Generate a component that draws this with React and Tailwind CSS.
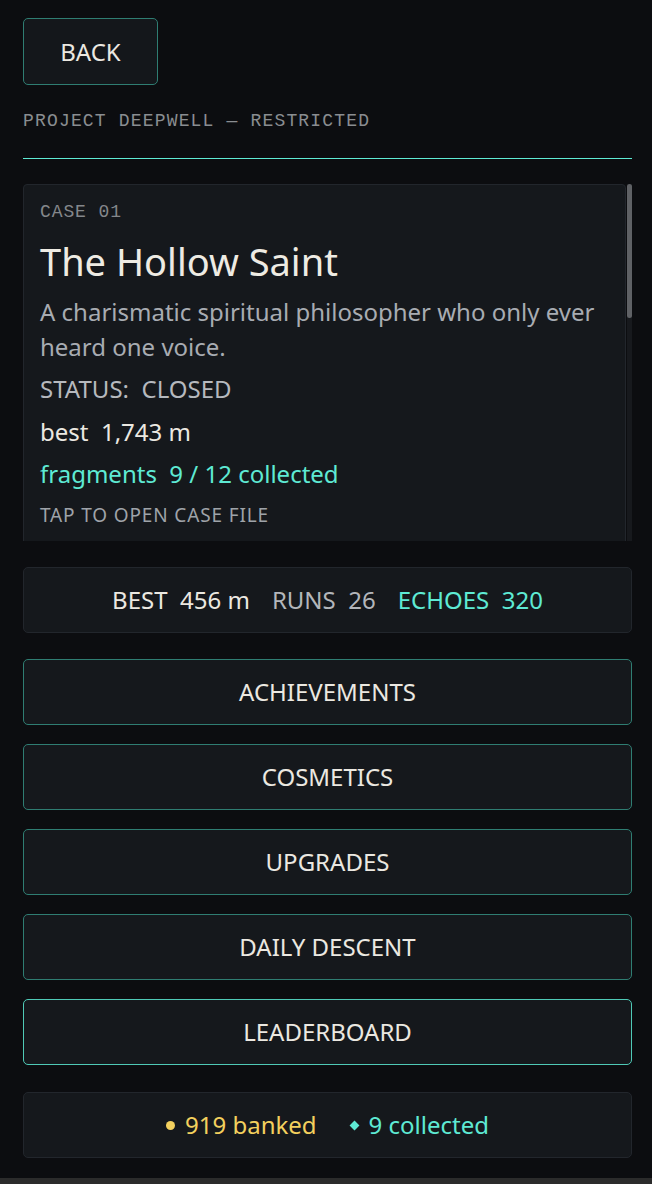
import React from 'react';

const cases = [
    {
        id: '01',
        title: 'The Hollow Saint',
        desc: 'A charismatic spiritual philosopher who only ever heard one voice.',
        status: 'CLOSED',
        best: '1,743 m',
        fragments: '9 / 12 collected',
    },
    {
        id: '02',
        title: 'The Quiet Engineer',
        desc: 'A builder of machines who stopped speaking the year the well was sealed.',
        status: 'OPEN',
        best: '456 m',
        fragments: '0 / 12 collected',
    },
];

const menu = ['ACHIEVEMENTS', 'COSMETICS', 'UPGRADES', 'DAILY DESCENT', 'LEADERBOARD'];

function CaseCard({ c }) {
    return (
        <div className="rounded-[4px] border border-[#22262c] bg-[#15181c] pl-[16px] pr-[20px] pt-[15px] pb-[17px]">
            <p className="font-['Liberation_Mono',monospace] text-[18px] leading-[24px] tracking-[0.05em] text-[#84878b]">CASE {c.id}</p>
            <h2 className="mt-[14px] text-[38px] leading-[46px] text-[#eeebe3]">{c.title}</h2>
            <p className="mt-[10px] text-[24px] leading-[35px] text-[#a8acb2]">{c.desc}</p>
            <p className="mt-[7px] whitespace-pre text-[24px] leading-[35px] text-[#b6b9be]">{'STATUS:  ' + c.status}</p>
            <p className="mt-[8px] whitespace-pre text-[24px] leading-[35px] text-[#ebe8e1]">{'best  ' + c.best}</p>
            <p className="mt-[7px] whitespace-pre text-[24px] leading-[35px] text-[#5eead4]">{'fragments  ' + c.fragments}</p>
            <p className="mt-[10px] text-[19px] leading-[28px] tracking-[0.045em] text-[#9fa3a9]">TAP TO OPEN CASE FILE</p>
        </div>
    );
}

export default function App() {
    return (
        <div className="min-h-[1184px] flex flex-col bg-[#0c0d10] font-['Noto_Sans',sans-serif]">
            <div className="flex-1 pl-[23px] pr-[20px] pt-[18px] pb-[20px]">
                <button className="h-[67px] w-[135px] rounded-[5px] border border-[#2f7d72] bg-[#14171b] text-[24px] text-[#ebe8e1]">
                    BACK
                </button>

                <p className="mt-[24px] font-['Liberation_Mono',monospace] text-[18px] leading-[24px] tracking-[0.065em] text-[#8a8d91]">
                    PROJECT DEEPWELL — RESTRICTED
                </p>
                <div className="mt-[25px] h-px bg-[#5eead4]" />

                {/* case list, scrolls; thumb drawn since headless hides scrollbars */}
                <div className="mt-[25px] flex h-[357px]">
                    <div className="flex-1 overflow-hidden">
                        <div className="flex flex-col gap-[16px]">
                            {cases.map(c => <CaseCard key={c.id} c={c} />)}
                            <div className="rounded-[4px] border border-[#22262c] bg-[#15181c] pl-[16px] pr-[20px] pt-[15px] pb-[17px]">
                                <p className="font-['Liberation_Mono',monospace] text-[18px] leading-[24px] tracking-[0.05em] text-[#84878b]">CASE 03</p>
                                <h2 className="mt-[14px] text-[38px] leading-[46px] text-[#6b6f75]">[ REDACTED ]</h2>
                            </div>
                        </div>
                    </div>
                    <div className="ml-[1px] w-[5px] bg-[#17191d]">
                        <div className="h-[134px] rounded-full bg-[#5f6165]" />
                    </div>
                </div>

                <div className="mt-[26px] flex h-[66px] items-center justify-center whitespace-pre rounded-[5px] border border-[#22262c] bg-[#15181c] text-[24px]">
                    <span className="text-[#ebe8e1]">{'BEST  456 m'}</span>
                    <span className="ml-[22px] text-[#b3b6bb]">{'RUNS  26'}</span>
                    <span className="ml-[22px] text-[#5eead4]">{'ECHOES  320'}</span>
                </div>

                <div className="mt-[26px] flex flex-col gap-[19px]">
                    {menu.map((m, i) => (
                        <button key={m}
                            className={`h-[66px] w-full rounded-[5px] border bg-[#15181c] text-[24px] text-[#ebe8e1] ${i === menu.length - 1 ? 'border-[#4fc9b6]' : 'border-[#2f7d72]'}`}>
                            {m}
                        </button>
                    ))}
                </div>

                <div className="mt-[27px] flex h-[66px] items-center justify-center rounded-[5px] border border-[#22262c] bg-[#15181c] text-[24px]">
                    <span className="flex items-center text-[#f3d05e]">
                        <span className="mr-[10px] h-[9px] w-[9px] rounded-full bg-[#f3d05e]" />
                        919 banked
                    </span>
                    <span className="ml-[34px] flex items-center text-[#5eead4]">
                        <span className="mr-[11px] h-[7px] w-[7px] rotate-45 bg-[#5eead4]" />
                        9 collected
                    </span>
                </div>
            </div>
            <div className="h-[7px] bg-[#2b2b2b]" />
        </div>
    );
}
